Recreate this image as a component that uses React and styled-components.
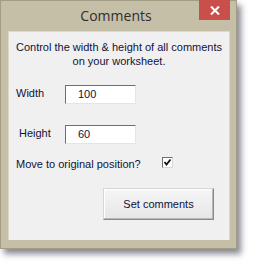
import React from 'react';
import styled, { createGlobalStyle } from 'styled-components';

const GlobalStyle = createGlobalStyle`
	html, body {
		margin: 0;
		padding: 0;
		background: #ffffff;
	}
	body {
		font-family: 'Liberation Sans', Arial, sans-serif;
	}
`;

const Page = styled.div`
	width: 253px;
	height: 265px;
	overflow: hidden;
`;

const Window = styled.div`
	width: 237px;
	height: 249px;
	box-sizing: border-box;
	background: #c6bfa7;
	border: 1px solid #a49d86;
	box-shadow: 4px 5px 6px rgba(40, 40, 60, 0.55);
	display: flex;
	flex-direction: column;
`;

const TitleBar = styled.div`
	height: 30px;
	display: grid;
	grid-template-columns: 1fr auto 1fr;
	padding-right: 6px;
`;

const Title = styled.div`
	grid-column: 2;
	align-self: center;
	font-family: 'Open Sans', 'Noto Sans', sans-serif;
	font-size: 14px;
	color: #2e2e2e;
	padding-left: 1px;
	margin-top: -1px;
`;

const CloseButton = styled.div`
	grid-column: 3;
	justify-self: end;
	width: 31px;
	height: 20px;
	margin-top: -1px;
	background: #c94f4c;
	display: flex;
	align-items: center;
	justify-content: center;
`;

const Client = styled.div`
	margin: 0 6px 8px 7px;
	flex: 1;
	background: #f0f0f0;
	border: 1px solid #ddd8c8;
	border-bottom: none;
	padding: 8px 0 0;
	color: #12123a;
	font-size: 11px;
`;

const Intro = styled.div`
	text-align: center;
	line-height: 14px;
	padding: 0 4px;
`;

const FieldRow = styled.div`
	display: grid;
	grid-template-columns: 56px 71px;
	align-items: center;
	margin-top: ${(p) => p.$top}px;
`;

const Label = styled.div`
	padding-left: ${(p) => p.$indent}px;
	margin-top: ${(p) => p.$raise}px;
`;

const TextBox = styled.div`
	height: 19px;
	box-sizing: border-box;
	background: #ffffff;
	border-top: 1px solid #6e6e6e;
	border-left: 1px solid #6e6e6e;
	border-right: 1px solid #e4e4e4;
	border-bottom: 1px solid #e4e4e4;
	padding-left: 12px;
	line-height: 17px;
	color: #12123a;
`;

const CheckRow = styled.div`
	display: flex;
	align-items: center;
	margin-top: 14px;
	padding-left: 7px;
`;

const CheckLabel = styled.div`
	width: 146px;
`;

const CheckBox = styled.div`
	width: 11px;
	height: 11px;
	box-sizing: border-box;
	background: #ffffff;
	border-top: 1px solid #707070;
	border-left: 1px solid #707070;
	border-right: 1px solid #d8d8d8;
	border-bottom: 1px solid #d8d8d8;
	display: flex;
	align-items: center;
	justify-content: center;
	margin-top: -4px;
`;

const ButtonRow = styled.div`
	display: flex;
	justify-content: flex-end;
	padding-right: 15px;
	margin-top: 18px;
`;

const Button = styled.div`
	width: 111px;
	height: 32px;
	box-sizing: border-box;
	border: 1px solid #8a8a8a;
	border-top-color: #d6d6d6;
	border-left-color: #d6d6d6;
	box-shadow: inset -1px -1px 0 #b8b8b8, inset 1px 1px 0 #ffffff;
	background: linear-gradient(#f6f6f6, #e6e6e6);
	display: flex;
	align-items: center;
	justify-content: center;
	color: #12123a;
	font-size: 11px;
`;

const App = () => {
	return (
		<Page>
			<GlobalStyle />
			<Window>
				<TitleBar>
					<Title>Comments</Title>
					<CloseButton>
						<svg width="10" height="9" viewBox="0 0 10 9">
							<path d="M1 0.5 L9 8.5 M9 0.5 L1 8.5" stroke="#ffffff" strokeWidth="2" />
						</svg>
					</CloseButton>
				</TitleBar>
				<Client>
					<Intro>
						Control the width &amp; height of all comments
						<br />
						on your worksheet.
					</Intro>
					<FieldRow $top={17}>
						<Label $indent={7} $raise={-4}>Width</Label>
						<TextBox>100</TextBox>
					</FieldRow>
					<FieldRow $top={21}>
						<Label $indent={10} $raise={-4}>Height</Label>
						<TextBox>60</TextBox>
					</FieldRow>
					<CheckRow>
						<CheckLabel>Move to original position?</CheckLabel>
						<CheckBox>
							<svg width="9" height="9" viewBox="0 0 9 9">
								<path d="M1.5 4 L3.5 6.5 L7.5 1.5" stroke="#111111" strokeWidth="1.8" fill="none" />
							</svg>
						</CheckBox>
					</CheckRow>
					<ButtonRow>
						<Button>Set comments</Button>
					</ButtonRow>
				</Client>
			</Window>
		</Page>
	);
};

export default App;
